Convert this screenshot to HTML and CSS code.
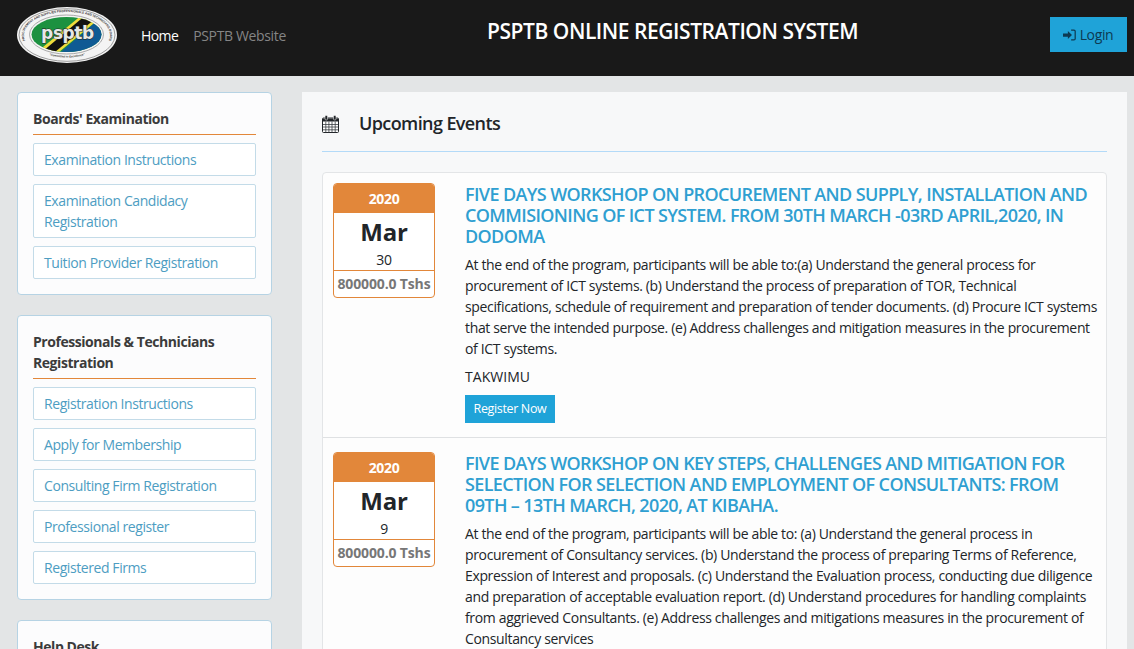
FILE: index.html
```html
<!DOCTYPE html>
<html lang="en">
<head>
<meta charset="utf-8">
<title>PSPTB Online Registration System</title>
<link rel="stylesheet" href="styles.css">
</head>
<body>
<header class="topbar">
  <svg class="logo" viewBox="0 0 100 56" width="100" height="56" aria-label="PSPTB logo">
    <defs>
      <path id="arcTop" d="M14 40.600 A43 23 0 1 1 86 40.600"/>
      <path id="arcBot" d="M28 47 Q50 54 72 47"/>
      <clipPath id="inner"><ellipse cx="49.500" cy="27.500" rx="35" ry="17.500"/></clipPath>
    </defs>
    <ellipse cx="50" cy="28" rx="50" ry="28" fill="#f4f4f4"/>
    <ellipse cx="50" cy="28" rx="48" ry="26.300" fill="none" stroke="#777" stroke-width="0.700"/>
    <ellipse cx="49.500" cy="27.500" rx="37" ry="19.500" fill="none" stroke="#888" stroke-width="0.700"/>
    <text class="logo-ring"><textPath href="#arcTop" startOffset="50%" text-anchor="middle">PROCUREMENT AND SUPPLIES PROFESSIONALS AND TECHNICIANS BOARD</textPath></text>
    <text class="logo-motto"><textPath href="#arcBot" startOffset="50%" text-anchor="middle">"Committed to Excellence"</textPath></text>
    <g clip-path="url(#inner)">
      <rect x="10" y="5" width="80" height="45" fill="#1c9140"/>
      <path d="M90 5 L90 50 L38 50 Z" fill="#0f5a94"/>
      <path d="M14 50 L66 7 L88 7 L36 50 Z" fill="#f0dc3c"/>
      <path d="M19 50 L70 7 L84 7 L32 50 Z" fill="#111"/>
    </g>
    <text class="logo-name" x="50.500" y="31.500" text-anchor="middle">psptb</text>
  </svg>
  <nav class="topnav">
    <a class="navlink active" href="#">Home</a>
    <a class="navlink" href="#">PSPTB Website</a>
  </nav>
  <h1 class="brand-title">PSPTB ONLINE REGISTRATION SYSTEM</h1>
  <a class="login" href="#">
    <svg class="login-icon" viewBox="0 0 16 14" width="13" height="12"><path d="M0 5h6V2l5 5-5 5V9H0z" fill="currentColor"/><path d="M10 1h3.500A1.500 1.500 0 0 1 15 2.500v9a1.500 1.500 0 0 1-1.500 1.500H10" fill="none" stroke="currentColor" stroke-width="1.500"/></svg>
    Login
  </a>
</header>
<div class="layout">
  <aside class="sidebar">
    <section class="panel">
      <h2 class="panel-title">Boards' Examination</h2>
      <ul class="links">
        <li><a href="#">Examination Instructions</a></li>
        <li><a href="#">Examination Candidacy Registration</a></li>
        <li><a href="#">Tuition Provider Registration</a></li>
      </ul>
    </section>
    <section class="panel">
      <h2 class="panel-title">Professionals &amp; Technicians Registration</h2>
      <ul class="links">
        <li><a href="#">Registration Instructions</a></li>
        <li><a href="#">Apply for Membership</a></li>
        <li><a href="#">Consulting Firm Registration</a></li>
        <li><a href="#">Professional register</a></li>
        <li><a href="#">Registered Firms</a></li>
      </ul>
    </section>
    <section class="panel">
      <h2 class="panel-title">Help Desk</h2>
    </section>
  </aside>
  <main class="content">
    <div class="content-head">
      <svg class="cal" viewBox="0 0 17 18" width="17" height="18"><path d="M1.500 3h14a1 1 0 0 1 1 1v12.500a1 1 0 0 1-1 1h-14a1 1 0 0 1-1-1V4a1 1 0 0 1 1-1z" fill="#fff" stroke="#212529"/><path d="M1 3.500h15v3H1z" fill="#212529"/><path d="M1 9.500h15M1 12h15M1 14.800h15M3.800 6.500v11M6.900 6.500v11M10 6.500v11M13.200 6.500v11" stroke="#3a3f44" stroke-width="0.800"/><rect x="3" y="0.500" width="2.500" height="4.500" rx="1" fill="#212529" stroke="#fff" stroke-width="0.500"/><rect x="11.500" y="0.500" width="2.500" height="4.500" rx="1" fill="#212529" stroke="#fff" stroke-width="0.500"/></svg>
      <h2 class="content-title">Upcoming Events</h2>
    </div>
    <div class="events">
      <article class="event">
        <div class="datebox">
          <div class="year">2020</div>
          <div class="month">Mar</div>
          <div class="day">30</div>
          <div class="price">800000.0 Tshs</div>
        </div>
        <div class="event-body">
          <h3 class="event-title">FIVE DAYS WORKSHOP ON PROCUREMENT AND SUPPLY, INSTALLATION AND COMMISIONING OF ICT SYSTEM. FROM 30TH MARCH -03RD APRIL,2020, IN DODOMA</h3>
          <p class="event-text">At the end of the program, participants will be able to:(a) Understand the general process for procurement of ICT systems. (b) Understand the process of preparation of TOR, Technical specifications, schedule of requirement and preparation of tender documents. (d) Procure ICT systems that serve the intended purpose. (e) Address challenges and mitigation measures in the procurement of ICT systems.</p>
          <p class="event-org">TAKWIMU</p>
          <a class="register" href="#">Register Now</a>
        </div>
      </article>
      <article class="event">
        <div class="datebox">
          <div class="year">2020</div>
          <div class="month">Mar</div>
          <div class="day">9</div>
          <div class="price">800000.0 Tshs</div>
        </div>
        <div class="event-body">
          <h3 class="event-title">FIVE DAYS WORKSHOP ON KEY STEPS, CHALLENGES AND MITIGATION FOR SELECTION FOR SELECTION AND EMPLOYMENT OF CONSULTANTS: FROM 09TH – 13TH MARCH, 2020, AT KIBAHA.</h3>
          <p class="event-text">At the end of the program, participants will be able to: (a) Understand the general process in procurement of Consultancy services. (b) Understand the process of preparing Terms of Reference, Expression of Interest and proposals. (c) Understand the Evaluation process, conducting due diligence and preparation of acceptable evaluation report. (d) Understand procedures for handling complaints from aggrieved Consultants. (e) Address challenges and mitigations measures in the procurement of Consultancy services</p>
        </div>
      </article>
    </div>
  </main>
</div>
</body>
</html>
```
FILE: styles.css
```css
* { box-sizing: border-box; }
html, body { height: 649px; overflow: hidden; }
body {
  margin: 0;
  background: #e3e5e6;
  color: #212529;
  font: 14px/21px "Open Sans", "Noto Sans", sans-serif;
  letter-spacing: -0.35px;
}
a { text-decoration: none; }
h1, h2, h3, p, ul { margin: 0; padding: 0; }

.topbar {
  height: 76px;
  background: #191919;
  display: flex;
  align-items: flex-start;
  padding: 0 7px 0 17px;
  position: relative;
}
.logo { margin-top: 7px; flex: none; }
.logo-ring { font: bold 3.100px "Liberation Sans", sans-serif; fill: #333; letter-spacing: 0; }
.logo-motto { font: italic bold 2.800px "Liberation Sans", sans-serif; fill: #333; letter-spacing: 0; }
.logo-name { font: bold 17px "DejaVu Sans", sans-serif; fill: #e6e8e6; stroke: #222; stroke-width: 1px; paint-order: stroke; letter-spacing: -0.4px; }
.topnav { display: flex; gap: 15px; margin: 25px 0 0 24px; }
.navlink { color: #858585; font-size: 14px; }
.navlink.active { color: #fff; letter-spacing: -0.6px; }
.brand-title {
  position: absolute;
  left: 487px;
  top: 17px;
  color: #fff;
  font-size: 21px;
  line-height: 28px;
  font-weight: 600;
  letter-spacing: -0.45px;
  white-space: nowrap;
}
.login {
  margin: 17px 0 0 auto;
  width: 77px;
  height: 35px;
  background: #1fa3d8;
  color: #0d3a52;
  display: flex;
  align-items: center;
  justify-content: center;
  gap: 4px;
  padding-right: 1px;
  font-size: 14px;
}

.layout {
  display: flex;
  align-items: flex-start;
  gap: 30px;
  padding: 16px 7px 0 17px;
}
.sidebar { width: 255px; flex: none; display: flex; flex-direction: column; gap: 20px; letter-spacing: -0.42px; }
.panel {
  background: #fcfcfd;
  border: 1px solid #b6d3e4;
  border-radius: 4px;
  padding: 15px;
}
.panel-title {
  font-size: 14px;
  line-height: 21px;
  font-weight: 700;
  letter-spacing: -0.45px;
  color: #3b3b3b;
  border-bottom: 1px solid #e2873a;
  padding-bottom: 5px;
  margin-bottom: 8px;
}
.links { list-style: none; display: flex; flex-direction: column; gap: 8px; }
.links a {
  display: block;
  background: #fff;
  border: 1px solid #c3dbe8;
  border-radius: 2px;
  padding: 5px 10px;
  color: #4d9dc2;
}

.content {
  flex: 1;
  background: #f7f8f9;
  padding: 20px;
  height: 600px;
}
.content-head {
  display: flex;
  align-items: center;
  box-sizing: content-box;
  height: 23px;
  border-bottom: 1px solid #b3daf8;
  padding-bottom: 16px;
}
.cal { flex: none; }
.content-title { margin-left: 20px; font-size: 18px; line-height: 23px; font-weight: 600; letter-spacing: -0.6px; color: #212529; }
.events {
  margin-top: 20px;
  background: #fdfdfd;
  border: 1px solid #e3e5e7;
  border-radius: 4px;
}
.event {
  display: flex;
  gap: 30px;
  padding: 10px 6px 10px 10px;
  height: 265px;
  border-bottom: 1px solid #dfe1e3;
}
.event + .event { padding-top: 14px; }
.datebox {
  width: 102px;
  height: 115px;
  flex: none;
  background: #fff;
  border: 1px solid #e2873a;
  border-radius: 4px;
  text-align: center;
  overflow: hidden;
}
.year { background: #e2873a; color: #fff; font-weight: 700; height: 29px; line-height: 29px; }
.month { font-size: 24px; line-height: 38px; font-weight: 700; color: #212529; letter-spacing: -0.2px; height: 37px; }
.day { height: 20px; line-height: 20px; }
.price { border-top: 1px solid #e2873a; height: 27px; line-height: 26px; font-weight: 700; color: #777; letter-spacing: -0.15px; white-space: nowrap; }
.event-body { flex: 1; min-width: 0; }
.event-title { color: #2f9fd1; font-size: 18px; line-height: 21px; font-weight: 600; letter-spacing: -0.62px; padding-top: 1px; margin-bottom: 7px; }
.event-text { line-height: 21px; margin-bottom: 7px; }
.event-org { font-weight: 500; letter-spacing: 0.05px; margin-bottom: 8px; }
.register {
  display: inline-block;
  width: 90px;
  height: 28px;
  background: #1fa3d8;
  color: #fff;
  font-size: 12.500px;
  line-height: 28px;
  text-align: center;
}
```
